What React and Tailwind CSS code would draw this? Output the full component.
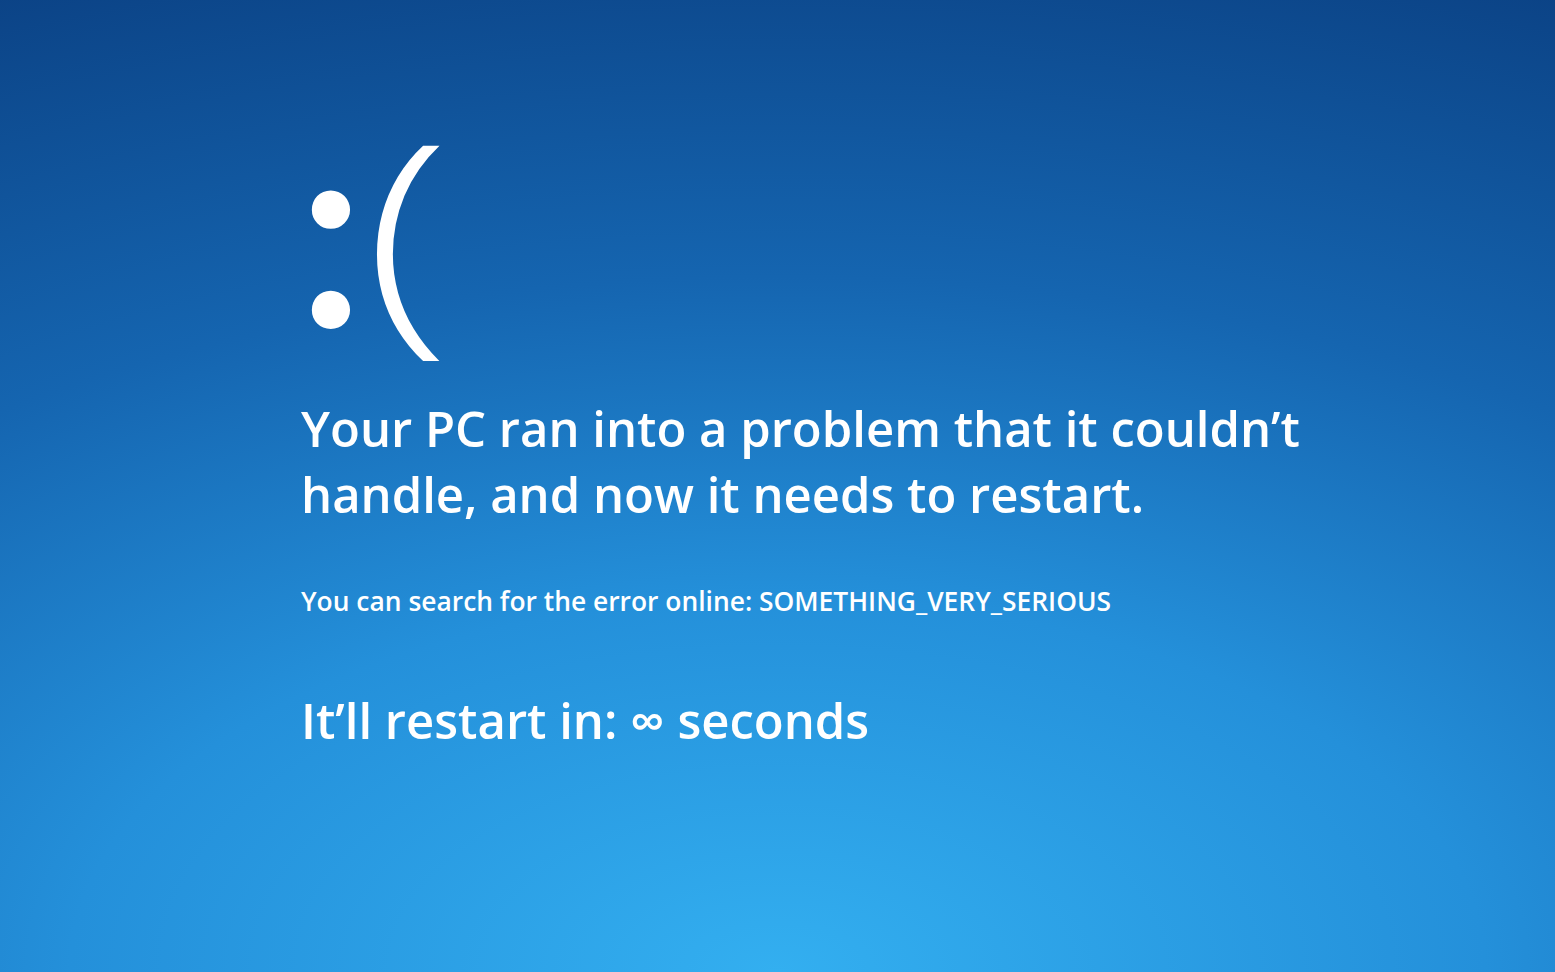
export default function App() {
  return (
    <div className="w-[1555px] h-[972px] overflow-hidden bg-[radial-gradient(ellipse_130%_110%_at_50%_100%,#33aff0_0%,#2490da_35%,#1565b0_65%,#0b4285_100%)] text-white font-['Open_Sans',sans-serif]">
      <div className="pl-[301px] pt-[110px] flex flex-col items-start">
        <div className="h-[270px]">
          <div className="flex items-baseline leading-none -mt-[31px] -ml-[5px]">
            <span className="inline-block text-[275px] font-semibold font-['Lato',sans-serif] translate-y-[5px]">:</span>
            <span className="inline-block text-[247px] font-light scale-x-[1.28] origin-left -ml-[2px]">(</span>
          </div>
        </div>
        <div className="mt-[15px] text-[49px] font-semibold leading-[66px] w-[1040px]">
          Your PC ran into a problem that it couldn’t handle, and now it needs to restart.
        </div>
        <div className="mt-[56px] text-[26.4px] font-semibold leading-[36px]">
          You can search for the error online: SOMETHING_VERY_SERIOUS
        </div>
        <div className="mt-[68px] text-[49px] font-semibold leading-[66px]">It’ll restart in: ∞ seconds</div>
      </div>
    </div>
  );
}
